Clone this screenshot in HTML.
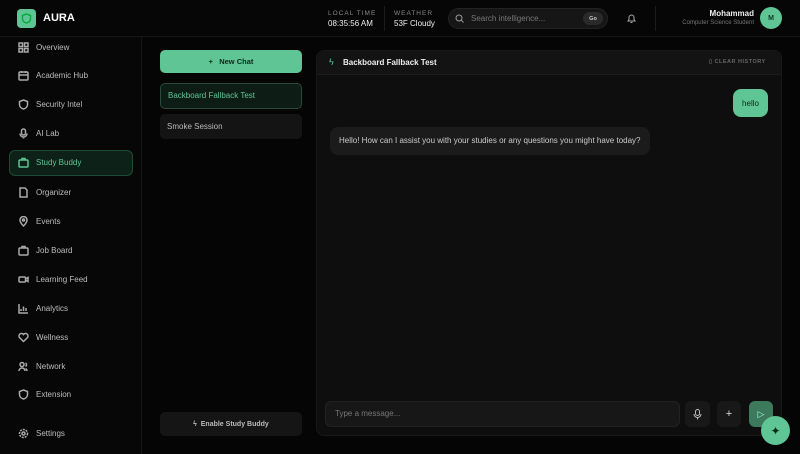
<!DOCTYPE html>
<html><head><style>
*{box-sizing:border-box;margin:0;padding:0}
body{width:800px;height:454px;background:#050505;font-family:"Liberation Sans",sans-serif;color:#ddd;position:relative;overflow:hidden}
.abs{position:absolute}
.nav{position:absolute;left:18px;font-size:8px;color:#bdbdbd;display:flex;align-items:center}
.nav svg{width:11px;height:11px;margin-right:7px;stroke:#aaa;fill:none;stroke-width:1.5}
.g{color:#5fc594}
.c{display:flex;align-items:center;justify-content:center}
</style></head><body>
<div class="abs" style="left:0;top:0;width:800px;height:37px;border-bottom:1px solid #161616;background:#060606"></div>
<div class="abs" style="left:0;top:37px;width:142px;height:417px;border-right:1px solid #161616;background:#070707"></div>
<div class="abs" style="left:17px;top:9px;width:19px;height:19px;border-radius:4px;background:#5fc594"><svg width="19" height="19" viewBox="0 0 19 19"><path d="M9.5 5l4 1.5v3c0 2.5-2 4-4 4.5-2-.5-4-2-4-4.5v-3z" fill="none" stroke="#0a3" stroke-width="1.3"/></svg></div>
<div class="abs" style="left:43px;top:12px;font-size:11px;font-weight:bold;color:#fff">AURA</div>

<div class="abs" style="left:328px;top:10px;font-size:6.5px;color:#888;letter-spacing:1px">LOCAL TIME</div>
<div class="abs" style="left:328px;top:19px;font-size:8px;color:#eee">08:35:56 AM</div>
<div class="abs" style="left:384px;top:6px;width:1px;height:25px;background:#1c1c1c"></div>
<div class="abs" style="left:394px;top:10px;font-size:6.5px;color:#888;letter-spacing:1px">WEATHER</div>
<div class="abs" style="left:394px;top:19px;font-size:8px;color:#eee">53F Cloudy</div>
<div class="abs" style="left:448px;top:8px;width:160px;height:21px;border-radius:11px;background:#161616;border:1px solid #222"></div>
<svg class="abs" style="left:455px;top:14px" width="9" height="9" viewBox="0 0 9 9"><circle cx="4" cy="4" r="3" stroke="#999" fill="none"/><path d="M6.2 6.2L8.5 8.5" stroke="#999"/></svg>
<div class="abs" style="left:471px;top:14px;font-size:8px;color:#777">Search intelligence...</div>
<div class="abs c" style="left:583px;top:12px;width:20px;height:13px;border-radius:7px;background:#2a2a2a;font-size:5.5px;color:#ccc;font-weight:bold">Go</div>
<svg class="abs" style="left:626px;top:13px" width="11" height="11" viewBox="0 0 11 11"><path d="M2 8h7l-1-1.5V4.5a2.5 2.5 0 0 0-5 0v2z M4.5 9.5h2" stroke="#aaa" fill="none"/></svg>
<div class="abs" style="left:655px;top:6px;width:1px;height:25px;background:#1c1c1c"></div>
<div class="abs" style="right:46px;top:9px;font-size:8px;color:#eee;font-weight:bold">Mohammad</div>
<div class="abs" style="right:46px;top:20px;font-size:6px;color:#777">Computer Science Student</div>
<div class="abs c" style="left:760px;top:7px;width:22px;height:22px;border-radius:50%;background:#5fc594;color:#0b3a24;font-size:7px;font-weight:bold">M</div>

<div class="abs" style="left:9px;top:150px;width:124px;height:26px;border-radius:6px;background:#0e2119;border:1px solid #1f4a35"></div>
<div class="nav" style="top:42px"><svg viewBox="0 0 11 11"><rect x="1" y="1" width="3.5" height="3.5"/><rect x="6.5" y="1" width="3.5" height="3.5"/><rect x="1" y="6.5" width="3.5" height="3.5"/><rect x="6.5" y="6.5" width="3.5" height="3.5"/></svg>Overview</div>
<div class="nav" style="top:70px"><svg viewBox="0 0 11 11"><rect x="1" y="2" width="9" height="8" rx="1"/><path d="M1 5h9M3.5 1v2M7.5 1v2"/></svg>Academic Hub</div>
<div class="nav" style="top:99px"><svg viewBox="0 0 11 11"><path d="M5.5 1l4 1.5v3c0 2.5-2 4-4 4.5-2-.5-4-2-4-4.5v-3z"/></svg>Security Intel</div>
<div class="nav" style="top:128px"><svg viewBox="0 0 11 11"><rect x="3.5" y="1" width="4" height="6" rx="2"/><path d="M2 5.5a3.5 3.5 0 0 0 7 0M5.5 9v1.5"/></svg>AI Lab</div>
<div class="nav g" style="top:157px"><svg viewBox="0 0 11 11" style="stroke:#5fc594"><rect x="1" y="3" width="9" height="7" rx="1"/><path d="M4 3V1.5h3V3"/></svg>Study Buddy</div>
<div class="nav" style="top:187px"><svg viewBox="0 0 11 11"><path d="M2 1h5l2 2v7H2z"/></svg>Organizer</div>
<div class="nav" style="top:216px"><svg viewBox="0 0 11 11"><path d="M5.5 10s3.5-3.5 3.5-6a3.5 3.5 0 0 0-7 0c0 2.5 3.5 6 3.5 6z"/><circle cx="5.5" cy="4" r="1"/></svg>Events</div>
<div class="nav" style="top:245px"><svg viewBox="0 0 11 11"><rect x="1" y="3" width="9" height="7" rx="1"/><path d="M4 3V1.5h3V3"/></svg>Job Board</div>
<div class="nav" style="top:274px"><svg viewBox="0 0 11 11"><rect x="1" y="3" width="6.5" height="5" rx="1"/><path d="M7.5 5l2.5-1.5v4L7.5 6"/></svg>Learning Feed</div>
<div class="nav" style="top:303px"><svg viewBox="0 0 11 11"><path d="M1 1v9h9M3 8V6M5.5 8V3.5M8 8V5"/></svg>Analytics</div>
<div class="nav" style="top:332px"><svg viewBox="0 0 11 11"><path d="M5.5 9.5L1.5 5.5a2.2 2.2 0 0 1 4-3 2.2 2.2 0 0 1 4 3z"/></svg>Wellness</div>
<div class="nav" style="top:361px"><svg viewBox="0 0 11 11"><circle cx="4" cy="3.5" r="2"/><path d="M1 10a3 3 0 0 1 6 0M7.5 2a2 2 0 0 1 0 3.5M9 10a3 3 0 0 0-1.5-2.5"/></svg>Network</div>
<div class="nav" style="top:389px"><svg viewBox="0 0 11 11"><path d="M5.5 1l4 1.5v3c0 2.5-2 4-4 4.5-2-.5-4-2-4-4.5v-3z"/></svg>Extension</div>
<div class="nav" style="top:428px"><svg viewBox="0 0 11 11"><circle cx="5.5" cy="5.5" r="1.5"/><circle cx="5.5" cy="5.5" r="4" stroke-dasharray="2 1"/></svg>Settings</div>

<div class="abs c" style="left:160px;top:50px;width:142px;height:23px;border-radius:5px;background:#5fc594;color:#0a2a1a;font-size:7.5px;font-weight:bold">+&nbsp;&nbsp; New Chat</div>
<div class="abs" style="left:160px;top:83px;width:142px;height:26px;border-radius:5px;background:#0e1c16;border:1px solid #2a4a3a;color:#5fc594;font-size:8px;line-height:24px;padding-left:7px">Backboard Fallback Test</div>
<div class="abs" style="left:160px;top:114px;width:142px;height:25px;border-radius:5px;background:#141414;color:#bbb;font-size:8px;line-height:25px;padding-left:7px">Smoke Session</div>
<div class="abs c" style="left:160px;top:412px;width:142px;height:24px;border-radius:5px;background:#151515;color:#bbb;font-size:7px;font-weight:bold">ϟ&nbsp; Enable Study Buddy</div>

<div class="abs" style="left:316px;top:50px;width:466px;height:386px;border-radius:8px;background:#0e0e0e;border:1px solid #181818"></div>
<div class="abs" style="left:317px;top:51px;width:464px;height:24px;border-radius:8px 8px 0 0;background:#131313;border-bottom:1px solid #1c1c1c"></div>
<div class="abs g" style="left:329px;top:57px;font-size:9px">ϟ</div>
<div class="abs" style="left:343px;top:58px;font-size:8px;font-weight:bold;color:#eee">Backboard Fallback Test</div>
<div class="abs" style="left:709px;top:59px;font-size:5.5px;font-weight:bold;color:#666;letter-spacing:.5px">▯ CLEAR HISTORY</div>
<div class="abs c" style="left:733px;top:89px;width:35px;height:28px;border-radius:8px;background:#5fc594;color:#0a2a1a;font-size:8px">hello</div>
<div class="abs" style="left:330px;top:127px;width:320px;height:28px;border-radius:8px;background:#1b1b1b;color:#ccc;font-size:8px;line-height:28px;padding-left:9px">Hello! How can I assist you with your studies or any questions you might have today?</div>
<div class="abs" style="left:325px;top:401px;width:355px;height:26px;border-radius:6px;background:#171717;border:1px solid #222;color:#777;font-size:8px;line-height:24px;padding-left:9px">Type a message...</div>
<div class="abs c" style="left:685px;top:401px;width:25px;height:26px;border-radius:6px;background:#181818"><svg width="9" height="11" viewBox="0 0 9 11"><rect x="2.5" y="0.5" width="4" height="6" rx="2" fill="none" stroke="#bbb"/><path d="M1 5a3.5 3.5 0 0 0 7 0M4.5 8.5v2" fill="none" stroke="#bbb"/></svg></div>
<div class="abs c" style="left:717px;top:401px;width:24px;height:26px;border-radius:6px;background:#181818;color:#ddd;font-size:11px">+</div>
<div class="abs c" style="left:749px;top:401px;width:24px;height:26px;border-radius:6px;background:#3d7a5c;color:#9fd;font-size:9px">▷</div>
<div class="abs c" style="left:761px;top:416px;width:29px;height:29px;border-radius:50%;background:#5fc594;color:#0a2a1a;font-size:12px">✦</div>
</body></html>
